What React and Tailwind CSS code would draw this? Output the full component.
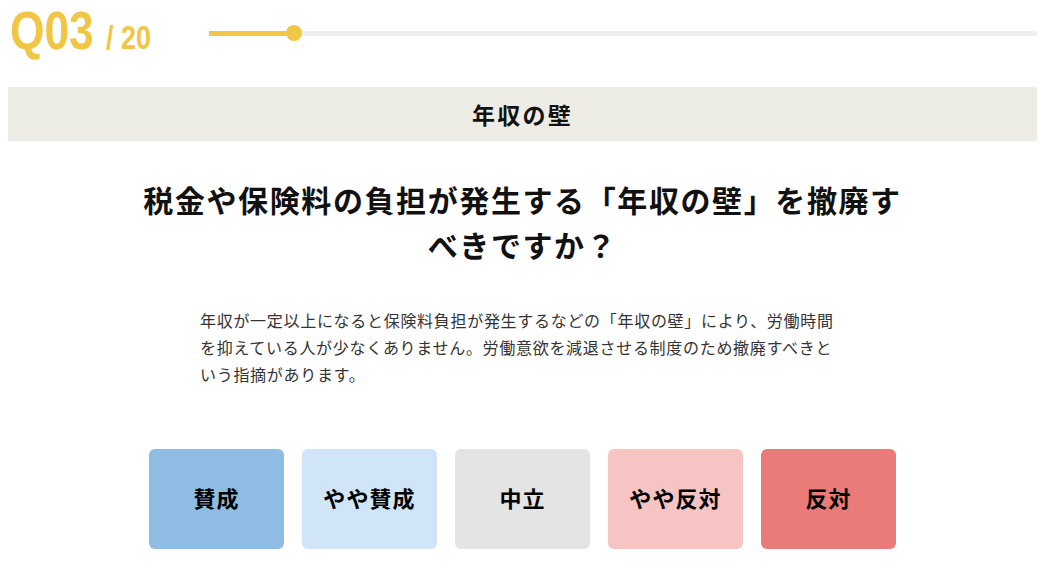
import React from "react";

const choices = [
  { label: "賛成", bg: "bg-[#8ebce3]" },
  { label: "やや賛成", bg: "bg-[#d0e5f8]" },
  { label: "中立", bg: "bg-[#e4e4e4]" },
  { label: "やや反対", bg: "bg-[#f6c4c2]" },
  { label: "反対", bg: "bg-[#ea7b78]" },
];

const jp = { fontFamily: '"Noto Sans CJK JP", "Noto Sans", sans-serif' };
const num = { fontFamily: '"Liberation Sans", Arial, sans-serif' };

export default function App() {
  const current = 3;
  const total = 20;
  const progress = ((current - 1) / total) * 100 + 0.3;

  return (
    <div className="min-h-screen bg-white pl-[8px] pr-[10px]" style={jp}>
      {/* header */}
      <div className="flex items-center h-[66px]">
        <div className="w-[201px] pl-[2px] -mt-[7px]">
          <div className="inline-flex items-baseline origin-left scale-x-[0.82] text-[#f1c644] font-bold whitespace-nowrap" style={num}>
            <span className="text-[54px] leading-none">Q03</span>
            <span className="text-[33px] leading-none ml-[15px]">/ 20</span>
          </div>
        </div>
        <div className="relative flex-1 h-[5px] bg-[#efefef]">
          <div className="relative h-full bg-[#f1c644]" style={{ width: `${progress}%` }}>
            <span className="absolute right-[-8px] top-1/2 -translate-y-1/2 w-[16px] h-[16px] rounded-full bg-[#f1c644]" />
          </div>
        </div>
      </div>

      {/* category banner */}
      <div className="mt-[21px] h-[54px] bg-[#eeede5] flex items-center justify-center">
        <h2 className="text-[23px] font-bold tracking-[0.1em] text-[#111]">年収の壁</h2>
      </div>

      {/* question */}
      <h1 className="mx-auto w-[780px] mt-[36px] text-center text-[30px] leading-[45px] font-bold tracking-[1.6px] text-[#111]">
        税金や保険料の負担が発生する「年収の壁」を撤廃すべきですか？
      </h1>

      <p className="mx-auto w-[645px] mt-[40px] text-[16px] leading-[27px] tracking-[0.7px] text-[#333]">
        年収が一定以上になると保険料負担が発生するなどの「年収の壁」により、労働時間を抑えている人が少なくありません。労働意欲を減退させる制度のため撤廃すべきという指摘があります。
      </p>

      {/* answers */}
      <div className="flex justify-center gap-[18px] mt-[61px]">
        {choices.map((c) => (
          <button
            key={c.label}
            className={`w-[135px] h-[100px] rounded-[6px] ${c.bg} flex items-center justify-center pb-[4px] text-[22px] font-bold tracking-[0.05em] text-black`}
          >
            {c.label}
          </button>
        ))}
      </div>
    </div>
  );
}
